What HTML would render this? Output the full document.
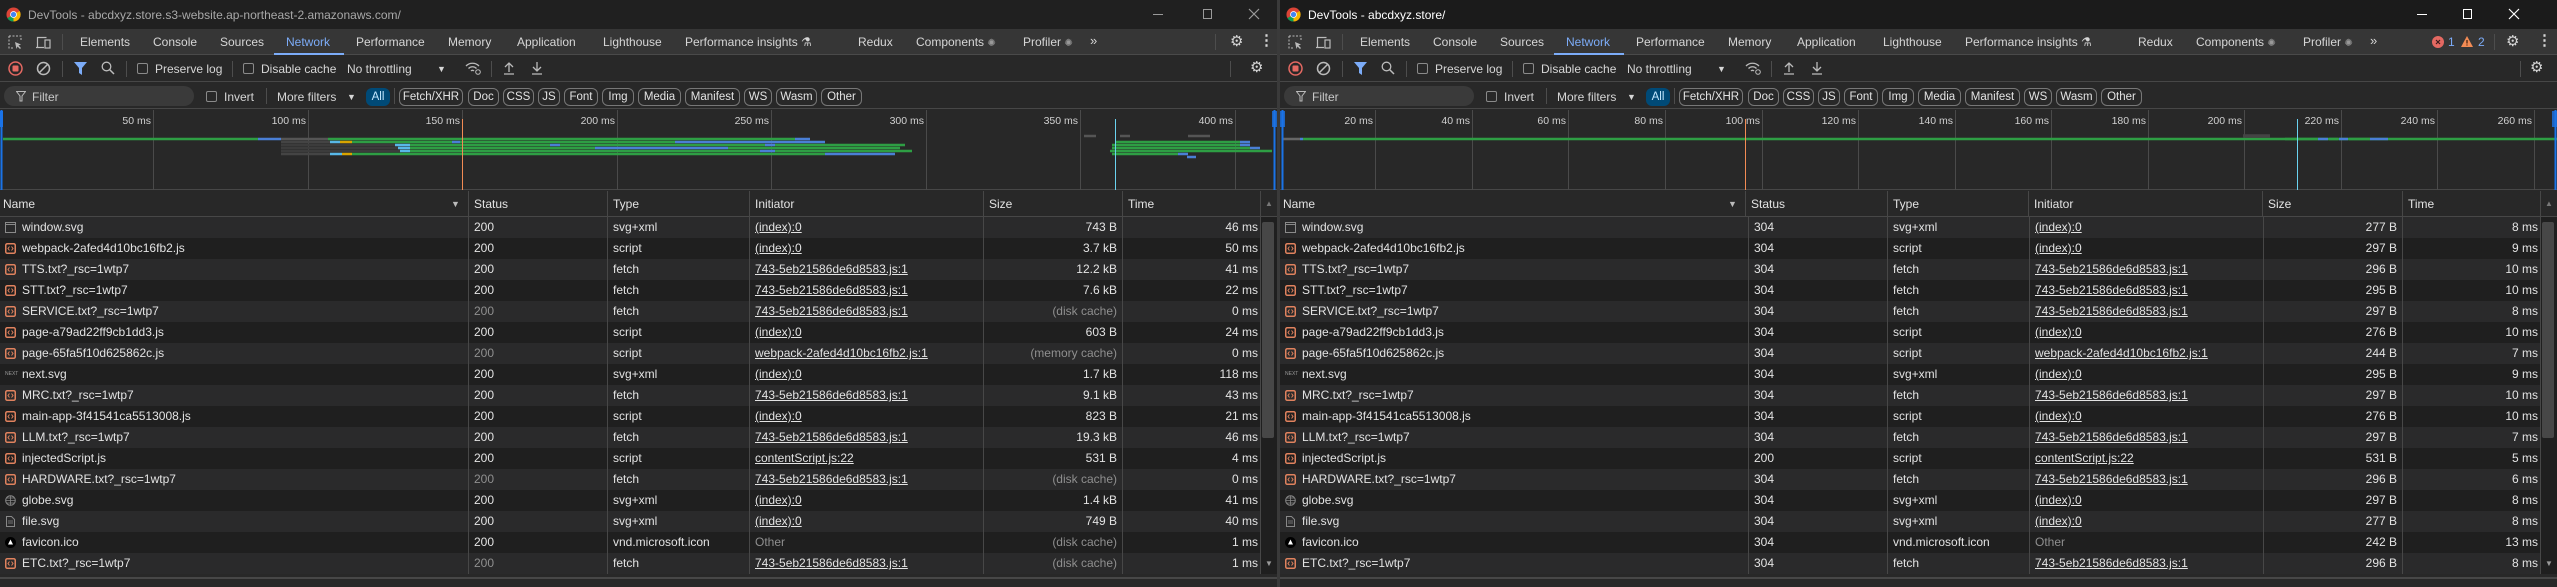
<!DOCTYPE html>
<html><head><meta charset="utf-8">
<style>
*{box-sizing:border-box;margin:0;padding:0}
body{width:2557px;height:587px;background:#1f1f1f;overflow:hidden;font-family:"Liberation Sans",sans-serif;font-size:12px;color:#e3e3e3;position:relative}
.win{position:absolute;top:0;width:1277px;height:587px;background:#282828;overflow:hidden}
.a{position:absolute;white-space:nowrap}
.title{position:absolute;left:0;top:0;width:100%;height:29px;background:#202020}
.title .t{position:absolute;left:28px;top:8px;font-size:12px;color:#a8a8a8}
.tabs{position:absolute;left:0;top:29px;width:100%;height:26px;background:#363636;border-bottom:1px solid #4a4a4a}
.tabs .a{top:6px;color:#d6d6d6}
.tb{position:absolute;left:0;top:55px;width:100%;height:27px;background:#282828;border-bottom:1px solid #474747}
.tb .a{top:7px;color:#d6d6d6}
.fb{position:absolute;left:0;top:83px;width:100%;height:26px;background:#282828;border-bottom:1px solid #474747}
.fb .a{top:7px;color:#d6d6d6}
.pill{position:absolute;left:4px;top:3px;width:190px;height:20px;border-radius:10px;background:#3a3a3a}
.chip{position:absolute;top:5px;height:18px;border:1px solid #777;border-radius:6px;color:#e3e3e3;font-size:11.5px;text-align:center;line-height:16px}
.cb{position:absolute;top:8px;width:11px;height:11px;border:1px solid #8a8a8a;border-radius:2px}
.sep{position:absolute;top:6px;width:1px;height:16px;background:#4d4d4d}
.ov{position:absolute;left:0;top:110px;width:100%;height:80px;background:#282828;border-bottom:1px solid #474747}
.hd{position:absolute;left:0;top:191px;width:100%;height:26px;background:#282828;border-bottom:1px solid #474747;display:flex}
.rows{position:absolute;left:0;top:217px;width:100%}
.r{display:flex;height:21px;line-height:21px}
.r:nth-child(odd){background:#2a2a2b}
.r:nth-child(even){background:#1f1f1f}
.c{overflow:hidden;white-space:nowrap;padding-left:5px;border-left:1px solid #474747}
.c:first-child{border-left:none}
.hd .c{line-height:26px}
.n{width:468px;position:relative;padding-left:22px}
.s{width:139px}.y{width:142px}.i{width:234px}
.z{width:139px;text-align:right;padding-right:5px}
.m{width:138px;text-align:right;padding-right:2px}
.sc{width:17px;background:#1f1f1f;border-left:1px solid #474747}
.u{text-decoration:underline}
.g{color:#8f8f8f}
.ic{position:absolute;left:5px;top:5px}
.bot{position:absolute;left:0;top:577px;width:100%;height:10px;background:#282828;border-top:2px solid #474747}
.thumb{position:absolute;left:1262px;top:222px;width:12px;height:216px;background:#474747;border-radius:2px}
</style></head><body>

<!-- ============ LEFT WINDOW ============ -->
<div class="win" style="left:0">
 <div class="title">
  <svg class="a" style="left:6px;top:7px" width="15" height="15" viewBox="0 0 16 16"><circle cx="8" cy="8" r="7.5" fill="#db4437"/><path d="M8 8 L1.5 11.8 A7.5 7.5 0 0 0 8 15.5Z" fill="#0f9d58"/><path d="M8 8 L8 15.5 A7.5 7.5 0 0 0 14.5 4.2Z" fill="#f4b400"/><circle cx="8" cy="8" r="3.6" fill="#fff"/><circle cx="8" cy="8" r="2.8" fill="#4285f4"/></svg>
  <div class="t">DevTools - abcdxyz.store.s3-website.ap-northeast-2.amazonaws.com/</div>
  <div class="a" style="left:1153px;top:14px;width:10px;height:1px;background:#9a9a9a"></div>
  <div class="a" style="left:1203px;top:9px;width:9px;height:10px;border:1px solid #9a9a9a"></div>
  <svg class="a" style="left:1248px;top:8px" width="12" height="12"><path d="M1 1L11 11M11 1L1 11" stroke="#9a9a9a" stroke-width="1.2"/></svg>
 </div>
 <div class="tabs">
  <svg class="a" style="left:8px;top:6px" width="14" height="14"><path d="M1 1h12v5M1 1v12h5" stroke="#bbb" stroke-dasharray="2 1.5" fill="none"/><path d="M7 7l6 2.5-2.5 1 2.5 2.5-1 1-2.5-2.5-1 2.5z" fill="#bbb"/></svg>
  <svg class="a" style="left:36px;top:6px" width="15" height="14"><path d="M1.5 12V2.5h9M0 12.5h8" stroke="#bbb" fill="none" stroke-width="1.2"/><rect x="9" y="5" width="5" height="8" fill="none" stroke="#bbb" stroke-width="1.2"/></svg>
  <div class="sep" style="left:62px;top:5px"></div>
  <div class="a" style="left:80px">Elements</div>
  <div class="a" style="left:153px">Console</div>
  <div class="a" style="left:220px">Sources</div>
  <div class="a" style="left:286px;color:#7cacf8">Network</div>
  <div class="a" style="left:274px;top:24px;width:70px;height:2px;background:#7cacf8"></div>
  <div class="a" style="left:356px">Performance</div>
  <div class="a" style="left:448px">Memory</div>
  <div class="a" style="left:517px">Application</div>
  <div class="a" style="left:603px">Lighthouse</div>
  <div class="a" style="left:685px">Performance insights ⚗</div>
  <div class="a" style="left:858px">Redux</div>
  <div class="a" style="left:916px">Components <span style="color:#999;font-size:10px">✺</span></div>
  <div class="a" style="left:1023px">Profiler <span style="color:#999;font-size:10px">✺</span></div>
  <div class="a" style="left:1090px;font-size:13px;top:4px">»</div>
  <div class="sep" style="left:1215px;top:5px"></div>
  <div class="a" style="left:1230px;top:3px;font-size:15px">⚙</div>
  <div class="a" style="left:1259px;top:2px;font-size:15px;font-weight:bold">⋮</div>
 </div>
 <div class="tb">
  <svg class="a" style="left:8px;top:6px" width="15" height="15"><circle cx="7.5" cy="7.5" r="6.5" fill="none" stroke="#e46962" stroke-width="1.5"/><rect x="4.5" y="4.5" width="6" height="6" rx="1" fill="#e46962"/></svg>
  <svg class="a" style="left:36px;top:6px" width="15" height="15"><circle cx="7.5" cy="7.5" r="6" fill="none" stroke="#bbb" stroke-width="1.5"/><path d="M3.5 11.5L11.5 3.5" stroke="#bbb" stroke-width="1.5"/></svg>
  <div class="sep" style="left:62px"></div>
  <svg class="a" style="left:74px;top:7px" width="13" height="13"><path d="M0 0h13L8 6v7L5 11V6z" fill="#7cacf8"/></svg>
  <svg class="a" style="left:101px;top:6px" width="14" height="14"><circle cx="5.5" cy="5.5" r="4.3" fill="none" stroke="#bbb" stroke-width="1.3"/><path d="M8.5 8.5L13 13" stroke="#bbb" stroke-width="1.5"/></svg>
  <div class="sep" style="left:126px"></div>
  <div class="cb" style="left:137px"></div>
  <div class="a" style="left:155px">Preserve log</div>
  <div class="sep" style="left:232px"></div>
  <div class="cb" style="left:243px"></div>
  <div class="a" style="left:261px">Disable cache</div>
  <div class="a" style="left:347px">No throttling</div>
  <div class="a" style="left:437px;font-size:9px;top:9px">▼</div>
  <svg class="a" style="left:465px;top:6px" width="17" height="14"><path d="M1 5a9 9 0 0 1 13 0M3.5 7.5a5.5 5.5 0 0 1 8 0M6 10a2 2 0 0 1 3 0" stroke="#bbb" fill="none" stroke-width="1.3"/><circle cx="13" cy="11" r="2.3" fill="none" stroke="#bbb"/></svg>
  <div class="sep" style="left:491px"></div>
  <svg class="a" style="left:503px;top:6px" width="12" height="14"><path d="M6 11V2M2 6l4-4 4 4M1 13h10" stroke="#bbb" fill="none" stroke-width="1.3"/></svg>
  <svg class="a" style="left:531px;top:6px" width="12" height="14"><path d="M6 1v9M2 6l4 4 4-4M1 13h10" stroke="#bbb" fill="none" stroke-width="1.3"/></svg>
  <div class="sep" style="left:1230px"></div>
  <div class="a" style="left:1250px;top:3px;font-size:15px">⚙</div>
 </div>
 <div class="fb">
  <div class="pill"></div>
  <svg class="a" style="left:16px;top:8px" width="10" height="11"><path d="M0.5 0.5h9L6 5v5H4V5z" fill="none" stroke="#bbb"/></svg>
  <div class="a" style="left:32px;color:#c8c8c8">Filter</div>
  <div class="cb" style="left:206px;top:8px"></div>
  <div class="a" style="left:224px">Invert</div>
  <div class="sep" style="left:266px;top:5px"></div>
  <div class="a" style="left:277px">More filters</div>
  <div class="a" style="left:347px;font-size:9px;top:9px">▼</div>
  <div class="chip" style="left:366px;width:24px;background:#004a77;border-color:#004a77;color:#c2e7ff">All</div>
  <div class="sep" style="left:394px;top:5px"></div>
  <div class="chip" style="left:399px;width:64px">Fetch/XHR</div>
  <div class="chip" style="left:468px;width:31px">Doc</div>
  <div class="chip" style="left:503px;width:31px">CSS</div>
  <div class="chip" style="left:538px;width:22px">JS</div>
  <div class="chip" style="left:564px;width:34px">Font</div>
  <div class="chip" style="left:602px;width:32px">Img</div>
  <div class="chip" style="left:638px;width:43px">Media</div>
  <div class="chip" style="left:685px;width:55px">Manifest</div>
  <div class="chip" style="left:744px;width:28px">WS</div>
  <div class="chip" style="left:776px;width:41px">Wasm</div>
  <div class="chip" style="left:821px;width:41px">Other</div>
 </div>
 <div class="ov">
  <svg width="1277" height="80" style="position:absolute;left:0;top:0">
   <g stroke="#4a4a4a"><path d="M153.5 0V80M308.5 0V80M462.5 0V80M617.5 0V80M771.5 0V80M926.5 0V80M1080.5 0V80M1235.5 0V80"/></g>
   <g fill="#d0d0d0" font-family="Liberation Sans" font-size="10.5" text-anchor="end">
    <text x="151" y="14">50 ms</text><text x="306" y="14">100 ms</text><text x="460" y="14">150 ms</text><text x="615" y="14">200 ms</text><text x="769" y="14">250 ms</text><text x="924" y="14">300 ms</text><text x="1078" y="14">350 ms</text><text x="1233" y="14">400 ms</text></g>
   <g stroke-width="2.5">
    <path d="M3 29H258" stroke="#2e9e44"/><path d="M258 29H281" stroke="#4a7fd6"/><path d="M281 29H328" stroke="#555"/><path d="M328 29H795" stroke="#2e9e44"/><path d="M795 29H810" stroke="#4a7fd6"/>
    <path d="M281 32H330" stroke="#444"/><path d="M330 32H340" stroke="#58b8e8"/><path d="M340 32H352" stroke="#d9a400"/><path d="M352 32H452" stroke="#2e9e44"/><path d="M452 32H460" stroke="#4a7fd6"/><path d="M460 32H675" stroke="#2e9e44"/><path d="M675 32H825" stroke="#4a7fd6"/>
    <path d="M281 35H395" stroke="#3c3c3c"/><path d="M395 35H410" stroke="#58b8e8"/><path d="M410 35H550" stroke="#2e9e44"/><path d="M550 35H560" stroke="#4a7fd6"/><path d="M560 35H765" stroke="#2e9e44"/><path d="M765 35H775" stroke="#4a7fd6"/><path d="M775 35H905" stroke="#2e9e44"/>
    <path d="M281 38H398" stroke="#3c3c3c"/><path d="M398 38H410" stroke="#58b8e8"/><path d="M410 38H595" stroke="#2e9e44"/><path d="M595 38H728" stroke="#4a7fd6"/><path d="M728 38H900" stroke="#2e9e44"/>
    <path d="M281 41H400" stroke="#3c3c3c"/><path d="M400 41H410" stroke="#58b8e8"/><path d="M410 41H760" stroke="#2e9e44"/><path d="M760 41H775" stroke="#4a7fd6"/><path d="M775 41H912" stroke="#2e9e44"/>
    <path d="M281 44H330" stroke="#444"/><path d="M330 44H342" stroke="#58b8e8"/><path d="M342 44H352" stroke="#d9a400"/><path d="M352 44H825" stroke="#2e9e44"/><path d="M825 44H895" stroke="#4a7fd6"/>
    <path d="M1084 26H1096M1120 26H1130M1188 26H1210" stroke="#555"/>
    <path d="M1115 32H1240" stroke="#2e9e44"/><path d="M1240 32H1250" stroke="#4a7fd6"/>
    <path d="M1112 35H1240" stroke="#2e9e44"/><path d="M1240 35H1250" stroke="#4a7fd6"/>
    <path d="M1112 38H1250" stroke="#2e9e44"/><path d="M1250 38H1260" stroke="#4a7fd6"/>
    <path d="M1110 41H1272" stroke="#2e9e44"/>
    <path d="M1112 44H1178" stroke="#2e9e44"/><path d="M1178 44H1188" stroke="#4a7fd6"/>
    <path d="M1187 47H1196" stroke="#4a7fd6"/>
   </g>
   <path d="M462.5 9V80" stroke="#f28b54"/><path d="M1115.5 9V80" stroke="#6ad3f0"/>
   <rect x="0" y="1" width="3" height="16" fill="#1a73e8"/><path d="M1.5 0V80" stroke="#1a73e8" stroke-width="2"/>
   <rect x="1272" y="1" width="5" height="16" fill="#1a73e8" opacity=".8"/><path d="M1274.5 0V80" stroke="#1a73e8" stroke-width="2"/>
  </svg>
 </div>
 <div class="hd"><div class="c n" style="padding-left:3px">Name<span style="position:absolute;left:451px;font-size:9px;color:#bbb">▼</span></div><div class="c s">Status</div><div class="c y">Type</div><div class="c i">Initiator</div><div class="c z" style="text-align:left">Size</div><div class="c m" style="text-align:left;padding-left:5px">Time</div><div class="c sc" style="background:#282828;color:#777;font-size:8px;text-align:center;padding:0">▲</div></div>
 <div class="rows">
  <div class="r"><div class="c n"><svg class="ic" width="11" height="11"><rect x=".5" y=".5" width="10" height="10" fill="none" stroke="#8a8a8a"/><path d="M1 2.5h9" stroke="#8a8a8a"/></svg>window.svg</div><div class="c s">200</div><div class="c y">svg+xml</div><div class="c i"><span class="u">(index):0</span></div><div class="c z">743 B</div><div class="c m">46 ms</div><div class="c sc"></div></div>
  <div class="r"><div class="c n"><svg class="ic" width="11" height="11"><rect x=".75" y=".75" width="9.5" height="9.5" rx="1.5" fill="none" stroke="#e0825e" stroke-width="1.5"/><path d="M4.5 3.5L3 5.5l1.5 2M6.5 3.5L8 5.5l-1.5 2" stroke="#e0825e" fill="none"/></svg>webpack-2afed4d10bc16fb2.js</div><div class="c s">200</div><div class="c y">script</div><div class="c i"><span class="u">(index):0</span></div><div class="c z">3.7 kB</div><div class="c m">50 ms</div><div class="c sc"></div></div>
  <div class="r"><div class="c n"><svg class="ic" width="11" height="11"><rect x=".75" y=".75" width="9.5" height="9.5" rx="1.5" fill="none" stroke="#e0825e" stroke-width="1.5"/><path d="M4.5 3.5L3 5.5l1.5 2M6.5 3.5L8 5.5l-1.5 2" stroke="#e0825e" fill="none"/></svg>TTS.txt?_rsc=1wtp7</div><div class="c s">200</div><div class="c y">fetch</div><div class="c i"><span class="u">743-5eb21586de6d8583.js:1</span></div><div class="c z">12.2 kB</div><div class="c m">41 ms</div><div class="c sc"></div></div>
  <div class="r"><div class="c n"><svg class="ic" width="11" height="11"><rect x=".75" y=".75" width="9.5" height="9.5" rx="1.5" fill="none" stroke="#e0825e" stroke-width="1.5"/><path d="M4.5 3.5L3 5.5l1.5 2M6.5 3.5L8 5.5l-1.5 2" stroke="#e0825e" fill="none"/></svg>STT.txt?_rsc=1wtp7</div><div class="c s">200</div><div class="c y">fetch</div><div class="c i"><span class="u">743-5eb21586de6d8583.js:1</span></div><div class="c z">7.6 kB</div><div class="c m">22 ms</div><div class="c sc"></div></div>
  <div class="r"><div class="c n"><svg class="ic" width="11" height="11"><rect x=".75" y=".75" width="9.5" height="9.5" rx="1.5" fill="none" stroke="#e0825e" stroke-width="1.5"/><path d="M4.5 3.5L3 5.5l1.5 2M6.5 3.5L8 5.5l-1.5 2" stroke="#e0825e" fill="none"/></svg>SERVICE.txt?_rsc=1wtp7</div><div class="c s g">200</div><div class="c y">fetch</div><div class="c i"><span class="u">743-5eb21586de6d8583.js:1</span></div><div class="c z g">(disk cache)</div><div class="c m">0 ms</div><div class="c sc"></div></div>
  <div class="r"><div class="c n"><svg class="ic" width="11" height="11"><rect x=".75" y=".75" width="9.5" height="9.5" rx="1.5" fill="none" stroke="#e0825e" stroke-width="1.5"/><path d="M4.5 3.5L3 5.5l1.5 2M6.5 3.5L8 5.5l-1.5 2" stroke="#e0825e" fill="none"/></svg>page-a79ad22ff9cb1dd3.js</div><div class="c s">200</div><div class="c y">script</div><div class="c i"><span class="u">(index):0</span></div><div class="c z">603 B</div><div class="c m">24 ms</div><div class="c sc"></div></div>
  <div class="r"><div class="c n"><svg class="ic" width="11" height="11"><rect x=".75" y=".75" width="9.5" height="9.5" rx="1.5" fill="none" stroke="#e0825e" stroke-width="1.5"/><path d="M4.5 3.5L3 5.5l1.5 2M6.5 3.5L8 5.5l-1.5 2" stroke="#e0825e" fill="none"/></svg>page-65fa5f10d625862c.js</div><div class="c s g">200</div><div class="c y">script</div><div class="c i"><span class="u">webpack-2afed4d10bc16fb2.js:1</span></div><div class="c z g">(memory cache)</div><div class="c m">0 ms</div><div class="c sc"></div></div>
  <div class="r"><div class="c n"><span class="ic" style="font-size:5px;color:#999;top:0">NEXT</span>next.svg</div><div class="c s">200</div><div class="c y">svg+xml</div><div class="c i"><span class="u">(index):0</span></div><div class="c z">1.7 kB</div><div class="c m">118 ms</div><div class="c sc"></div></div>
  <div class="r"><div class="c n"><svg class="ic" width="11" height="11"><rect x=".75" y=".75" width="9.5" height="9.5" rx="1.5" fill="none" stroke="#e0825e" stroke-width="1.5"/><path d="M4.5 3.5L3 5.5l1.5 2M6.5 3.5L8 5.5l-1.5 2" stroke="#e0825e" fill="none"/></svg>MRC.txt?_rsc=1wtp7</div><div class="c s">200</div><div class="c y">fetch</div><div class="c i"><span class="u">743-5eb21586de6d8583.js:1</span></div><div class="c z">9.1 kB</div><div class="c m">43 ms</div><div class="c sc"></div></div>
  <div class="r"><div class="c n"><svg class="ic" width="11" height="11"><rect x=".75" y=".75" width="9.5" height="9.5" rx="1.5" fill="none" stroke="#e0825e" stroke-width="1.5"/><path d="M4.5 3.5L3 5.5l1.5 2M6.5 3.5L8 5.5l-1.5 2" stroke="#e0825e" fill="none"/></svg>main-app-3f41541ca5513008.js</div><div class="c s">200</div><div class="c y">script</div><div class="c i"><span class="u">(index):0</span></div><div class="c z">823 B</div><div class="c m">21 ms</div><div class="c sc"></div></div>
  <div class="r"><div class="c n"><svg class="ic" width="11" height="11"><rect x=".75" y=".75" width="9.5" height="9.5" rx="1.5" fill="none" stroke="#e0825e" stroke-width="1.5"/><path d="M4.5 3.5L3 5.5l1.5 2M6.5 3.5L8 5.5l-1.5 2" stroke="#e0825e" fill="none"/></svg>LLM.txt?_rsc=1wtp7</div><div class="c s">200</div><div class="c y">fetch</div><div class="c i"><span class="u">743-5eb21586de6d8583.js:1</span></div><div class="c z">19.3 kB</div><div class="c m">46 ms</div><div class="c sc"></div></div>
  <div class="r"><div class="c n"><svg class="ic" width="11" height="11"><rect x=".75" y=".75" width="9.5" height="9.5" rx="1.5" fill="none" stroke="#e0825e" stroke-width="1.5"/><path d="M4.5 3.5L3 5.5l1.5 2M6.5 3.5L8 5.5l-1.5 2" stroke="#e0825e" fill="none"/></svg>injectedScript.js</div><div class="c s">200</div><div class="c y">script</div><div class="c i"><span class="u">contentScript.js:22</span></div><div class="c z">531 B</div><div class="c m">4 ms</div><div class="c sc"></div></div>
  <div class="r"><div class="c n"><svg class="ic" width="11" height="11"><rect x=".75" y=".75" width="9.5" height="9.5" rx="1.5" fill="none" stroke="#e0825e" stroke-width="1.5"/><path d="M4.5 3.5L3 5.5l1.5 2M6.5 3.5L8 5.5l-1.5 2" stroke="#e0825e" fill="none"/></svg>HARDWARE.txt?_rsc=1wtp7</div><div class="c s g">200</div><div class="c y">fetch</div><div class="c i"><span class="u">743-5eb21586de6d8583.js:1</span></div><div class="c z g">(disk cache)</div><div class="c m">0 ms</div><div class="c sc"></div></div>
  <div class="r"><div class="c n"><svg class="ic" width="11" height="11"><circle cx="5.5" cy="5.5" r="4.8" fill="none" stroke="#888"/><path d="M.7 5.5h9.6M5.5.7v9.6M2 3h7M2 8h7" stroke="#888" stroke-width=".8"/></svg>globe.svg</div><div class="c s">200</div><div class="c y">svg+xml</div><div class="c i"><span class="u">(index):0</span></div><div class="c z">1.4 kB</div><div class="c m">41 ms</div><div class="c sc"></div></div>
  <div class="r"><div class="c n"><svg class="ic" width="11" height="11"><path d="M1.5.5h5l3 3v7h-8z" fill="none" stroke="#888"/><path d="M3 5h5M3 7h5" stroke="#888" stroke-width=".8"/></svg>file.svg</div><div class="c s">200</div><div class="c y">svg+xml</div><div class="c i"><span class="u">(index):0</span></div><div class="c z">749 B</div><div class="c m">40 ms</div><div class="c sc"></div></div>
  <div class="r"><div class="c n"><svg class="ic" width="11" height="11"><circle cx="5.5" cy="5.5" r="5.5" fill="#000"/><path d="M5.5 2.5L8 7.5H3z" fill="#fff"/></svg>favicon.ico</div><div class="c s">200</div><div class="c y">vnd.microsoft.icon</div><div class="c i g">Other</div><div class="c z g">(disk cache)</div><div class="c m">1 ms</div><div class="c sc"></div></div>
  <div class="r"><div class="c n"><svg class="ic" width="11" height="11"><rect x=".75" y=".75" width="9.5" height="9.5" rx="1.5" fill="none" stroke="#e0825e" stroke-width="1.5"/><path d="M4.5 3.5L3 5.5l1.5 2M6.5 3.5L8 5.5l-1.5 2" stroke="#e0825e" fill="none"/></svg>ETC.txt?_rsc=1wtp7</div><div class="c s g">200</div><div class="c y">fetch</div><div class="c i"><span class="u">743-5eb21586de6d8583.js:1</span></div><div class="c z g">(disk cache)</div><div class="c m">1 ms</div><div class="c sc" style="color:#999;font-size:8px;text-align:center;padding:0">▼</div></div>
 </div>
 <div class="thumb"></div>
 <div class="bot"></div>
</div>

<div style="position:absolute;left:1277px;top:0;width:3px;height:587px;background:#3a3a3a"></div>

<!-- ============ RIGHT WINDOW ============ -->
<div class="win" style="left:1280px">
 <div class="title" style="background:#1b1b1b">
  <svg class="a" style="left:6px;top:7px" width="15" height="15" viewBox="0 0 16 16"><circle cx="8" cy="8" r="7.5" fill="#db4437"/><path d="M8 8 L1.5 11.8 A7.5 7.5 0 0 0 8 15.5Z" fill="#0f9d58"/><path d="M8 8 L8 15.5 A7.5 7.5 0 0 0 14.5 4.2Z" fill="#f4b400"/><circle cx="8" cy="8" r="3.6" fill="#fff"/><circle cx="8" cy="8" r="2.8" fill="#4285f4"/></svg>
  <div class="t" style="color:#fff">DevTools - abcdxyz.store/</div>
  <div class="a" style="left:1137px;top:14px;width:10px;height:1px;background:#fff"></div>
  <div class="a" style="left:1183px;top:9px;width:9px;height:10px;border:1px solid #fff"></div>
  <svg class="a" style="left:1228px;top:8px" width="12" height="12"><path d="M1 1L11 11M11 1L1 11" stroke="#fff" stroke-width="1.2"/></svg>
 </div>
 <div class="tabs">
  <svg class="a" style="left:8px;top:6px" width="14" height="14"><path d="M1 1h12v5M1 1v12h5" stroke="#bbb" stroke-dasharray="2 1.5" fill="none"/><path d="M7 7l6 2.5-2.5 1 2.5 2.5-1 1-2.5-2.5-1 2.5z" fill="#bbb"/></svg>
  <svg class="a" style="left:36px;top:6px" width="15" height="14"><path d="M1.5 12V2.5h9M0 12.5h8" stroke="#bbb" fill="none" stroke-width="1.2"/><rect x="9" y="5" width="5" height="8" fill="none" stroke="#bbb" stroke-width="1.2"/></svg>
  <div class="sep" style="left:62px;top:5px"></div>
  <div class="a" style="left:80px">Elements</div>
  <div class="a" style="left:153px">Console</div>
  <div class="a" style="left:220px">Sources</div>
  <div class="a" style="left:286px;color:#7cacf8">Network</div>
  <div class="a" style="left:274px;top:24px;width:70px;height:2px;background:#7cacf8"></div>
  <div class="a" style="left:356px">Performance</div>
  <div class="a" style="left:448px">Memory</div>
  <div class="a" style="left:517px">Application</div>
  <div class="a" style="left:603px">Lighthouse</div>
  <div class="a" style="left:685px">Performance insights ⚗</div>
  <div class="a" style="left:858px">Redux</div>
  <div class="a" style="left:916px">Components <span style="color:#999;font-size:10px">✺</span></div>
  <div class="a" style="left:1023px">Profiler <span style="color:#999;font-size:10px">✺</span></div>
  <div class="a" style="left:1090px;font-size:13px;top:4px">»</div>
  <svg class="a" style="left:1152px;top:7px" width="12" height="12"><circle cx="6" cy="6" r="6" fill="#e46962"/><path d="M4 4l4 4M8 4l-4 4" stroke="#3a1a1a" stroke-width="1.2"/></svg>
  <div class="a" style="left:1168px;color:#7cacf8">1</div>
  <svg class="a" style="left:1181px;top:7px" width="12" height="11"><path d="M6 0L12 11H0z" fill="#f28b54"/><path d="M6 4v3.5M6 8.5v1" stroke="#3a1a0a" stroke-width="1.2"/></svg>
  <div class="a" style="left:1198px;color:#7cacf8">2</div>
  <div class="sep" style="left:1214px;top:5px"></div>
  <div class="a" style="left:1226px;top:3px;font-size:15px">⚙</div>
  <div class="a" style="left:1257px;top:2px;font-size:15px;font-weight:bold">⋮</div>
 </div>
 <div class="tb">
  <svg class="a" style="left:8px;top:6px" width="15" height="15"><circle cx="7.5" cy="7.5" r="6.5" fill="none" stroke="#e46962" stroke-width="1.5"/><rect x="4.5" y="4.5" width="6" height="6" rx="1" fill="#e46962"/></svg>
  <svg class="a" style="left:36px;top:6px" width="15" height="15"><circle cx="7.5" cy="7.5" r="6" fill="none" stroke="#bbb" stroke-width="1.5"/><path d="M3.5 11.5L11.5 3.5" stroke="#bbb" stroke-width="1.5"/></svg>
  <div class="sep" style="left:62px"></div>
  <svg class="a" style="left:74px;top:7px" width="13" height="13"><path d="M0 0h13L8 6v7L5 11V6z" fill="#7cacf8"/></svg>
  <svg class="a" style="left:101px;top:6px" width="14" height="14"><circle cx="5.5" cy="5.5" r="4.3" fill="none" stroke="#bbb" stroke-width="1.3"/><path d="M8.5 8.5L13 13" stroke="#bbb" stroke-width="1.5"/></svg>
  <div class="sep" style="left:126px"></div>
  <div class="cb" style="left:137px"></div>
  <div class="a" style="left:155px">Preserve log</div>
  <div class="sep" style="left:232px"></div>
  <div class="cb" style="left:243px"></div>
  <div class="a" style="left:261px">Disable cache</div>
  <div class="a" style="left:347px">No throttling</div>
  <div class="a" style="left:437px;font-size:9px;top:9px">▼</div>
  <svg class="a" style="left:465px;top:6px" width="17" height="14"><path d="M1 5a9 9 0 0 1 13 0M3.5 7.5a5.5 5.5 0 0 1 8 0M6 10a2 2 0 0 1 3 0" stroke="#bbb" fill="none" stroke-width="1.3"/><circle cx="13" cy="11" r="2.3" fill="none" stroke="#bbb"/></svg>
  <div class="sep" style="left:491px"></div>
  <svg class="a" style="left:503px;top:6px" width="12" height="14"><path d="M6 11V2M2 6l4-4 4 4M1 13h10" stroke="#bbb" fill="none" stroke-width="1.3"/></svg>
  <svg class="a" style="left:531px;top:6px" width="12" height="14"><path d="M6 1v9M2 6l4 4 4-4M1 13h10" stroke="#bbb" fill="none" stroke-width="1.3"/></svg>
  <div class="sep" style="left:1240px"></div>
  <div class="a" style="left:1250px;top:3px;font-size:15px">⚙</div>
 </div>
 <div class="fb">
  <div class="pill"></div>
  <svg class="a" style="left:16px;top:8px" width="10" height="11"><path d="M0.5 0.5h9L6 5v5H4V5z" fill="none" stroke="#bbb"/></svg>
  <div class="a" style="left:32px;color:#c8c8c8">Filter</div>
  <div class="cb" style="left:206px;top:8px"></div>
  <div class="a" style="left:224px">Invert</div>
  <div class="sep" style="left:266px;top:5px"></div>
  <div class="a" style="left:277px">More filters</div>
  <div class="a" style="left:347px;font-size:9px;top:9px">▼</div>
  <div class="chip" style="left:366px;width:24px;background:#004a77;border-color:#004a77;color:#c2e7ff">All</div>
  <div class="sep" style="left:394px;top:5px"></div>
  <div class="chip" style="left:399px;width:64px">Fetch/XHR</div>
  <div class="chip" style="left:468px;width:31px">Doc</div>
  <div class="chip" style="left:503px;width:31px">CSS</div>
  <div class="chip" style="left:538px;width:22px">JS</div>
  <div class="chip" style="left:564px;width:34px">Font</div>
  <div class="chip" style="left:602px;width:32px">Img</div>
  <div class="chip" style="left:638px;width:43px">Media</div>
  <div class="chip" style="left:685px;width:55px">Manifest</div>
  <div class="chip" style="left:744px;width:28px">WS</div>
  <div class="chip" style="left:776px;width:41px">Wasm</div>
  <div class="chip" style="left:821px;width:41px">Other</div>
 </div>
 <div class="ov">
  <svg width="1277" height="80" style="position:absolute;left:0;top:0">
   <g stroke="#4a4a4a"><path d="M95.5 0V80M192.5 0V80M288.5 0V80M385.5 0V80M482.5 0V80M578.5 0V80M675.5 0V80M771.5 0V80M868.5 0V80M964.5 0V80M1061.5 0V80M1157.5 0V80M1254.5 0V80"/></g>
   <g fill="#d0d0d0" font-family="Liberation Sans" font-size="10.5" text-anchor="end">
    <text x="93" y="14">20 ms</text><text x="190" y="14">40 ms</text><text x="286" y="14">60 ms</text><text x="383" y="14">80 ms</text><text x="480" y="14">100 ms</text><text x="576" y="14">120 ms</text><text x="673" y="14">140 ms</text><text x="769" y="14">160 ms</text><text x="866" y="14">180 ms</text><text x="962" y="14">200 ms</text><text x="1059" y="14">220 ms</text><text x="1155" y="14">240 ms</text><text x="1252" y="14">260 ms</text></g>
   <g stroke-width="2.5">
    <path d="M3 29H20" stroke="#666"/><path d="M20 29H23" stroke="#4a7fd6"/><path d="M23 29H1277" stroke="#2e9e44"/>
    <path d="M963 26H990" stroke="#444" stroke-width="3.5"/>
    <path d="M1005 29H1038" stroke="#2e9e44"/><path d="M1038 29H1048" stroke="#4a7fd6"/><path d="M1049 29H1058" stroke="#2e9e44"/><path d="M1059 29H1068" stroke="#4a7fd6"/><path d="M1069 29H1090" stroke="#2e9e44"/><path d="M1090 29H1108" stroke="#4a7fd6"/>
   </g>
   <path d="M465.5 9V80" stroke="#f28b54"/><path d="M1017.5 9V80" stroke="#6ad3f0"/>
   <rect x="0" y="1" width="5" height="16" fill="#1a73e8" opacity=".8"/><path d="M2.5 0V80" stroke="#1a73e8" stroke-width="2"/>
   <rect x="1272" y="1" width="5" height="16" fill="#1a73e8" opacity=".8"/><path d="M1275.5 0V80" stroke="#1a73e8" stroke-width="2"/>
  </svg>
 </div>
 <div class="hd"><div class="c n" style="padding-left:3px;width:465px">Name<span style="position:absolute;left:448px;font-size:9px;color:#bbb">▼</span></div><div class="c s" style="width:142px">Status</div><div class="c y" style="width:141px">Type</div><div class="c i">Initiator</div><div class="c z" style="text-align:left;width:140px">Size</div><div class="c m" style="text-align:left;padding-left:5px">Time</div><div class="c sc" style="background:#282828;color:#777;font-size:8px;text-align:center;padding:0">▲</div></div>
 <div class="rows" id="rr">
  <div class="r"><div class="c n"><svg class="ic" width="11" height="11"><rect x=".5" y=".5" width="10" height="10" fill="none" stroke="#8a8a8a"/><path d="M1 2.5h9" stroke="#8a8a8a"/></svg>window.svg</div><div class="c s">304</div><div class="c y">svg+xml</div><div class="c i"><span class="u">(index):0</span></div><div class="c z">277 B</div><div class="c m">8 ms</div><div class="c sc"></div></div>
  <div class="r"><div class="c n"><svg class="ic" width="11" height="11"><rect x=".75" y=".75" width="9.5" height="9.5" rx="1.5" fill="none" stroke="#e0825e" stroke-width="1.5"/><path d="M4.5 3.5L3 5.5l1.5 2M6.5 3.5L8 5.5l-1.5 2" stroke="#e0825e" fill="none"/></svg>webpack-2afed4d10bc16fb2.js</div><div class="c s">304</div><div class="c y">script</div><div class="c i"><span class="u">(index):0</span></div><div class="c z">297 B</div><div class="c m">9 ms</div><div class="c sc"></div></div>
  <div class="r"><div class="c n"><svg class="ic" width="11" height="11"><rect x=".75" y=".75" width="9.5" height="9.5" rx="1.5" fill="none" stroke="#e0825e" stroke-width="1.5"/><path d="M4.5 3.5L3 5.5l1.5 2M6.5 3.5L8 5.5l-1.5 2" stroke="#e0825e" fill="none"/></svg>TTS.txt?_rsc=1wtp7</div><div class="c s">304</div><div class="c y">fetch</div><div class="c i"><span class="u">743-5eb21586de6d8583.js:1</span></div><div class="c z">296 B</div><div class="c m">10 ms</div><div class="c sc"></div></div>
  <div class="r"><div class="c n"><svg class="ic" width="11" height="11"><rect x=".75" y=".75" width="9.5" height="9.5" rx="1.5" fill="none" stroke="#e0825e" stroke-width="1.5"/><path d="M4.5 3.5L3 5.5l1.5 2M6.5 3.5L8 5.5l-1.5 2" stroke="#e0825e" fill="none"/></svg>STT.txt?_rsc=1wtp7</div><div class="c s">304</div><div class="c y">fetch</div><div class="c i"><span class="u">743-5eb21586de6d8583.js:1</span></div><div class="c z">295 B</div><div class="c m">10 ms</div><div class="c sc"></div></div>
  <div class="r"><div class="c n"><svg class="ic" width="11" height="11"><rect x=".75" y=".75" width="9.5" height="9.5" rx="1.5" fill="none" stroke="#e0825e" stroke-width="1.5"/><path d="M4.5 3.5L3 5.5l1.5 2M6.5 3.5L8 5.5l-1.5 2" stroke="#e0825e" fill="none"/></svg>SERVICE.txt?_rsc=1wtp7</div><div class="c s">304</div><div class="c y">fetch</div><div class="c i"><span class="u">743-5eb21586de6d8583.js:1</span></div><div class="c z">297 B</div><div class="c m">8 ms</div><div class="c sc"></div></div>
  <div class="r"><div class="c n"><svg class="ic" width="11" height="11"><rect x=".75" y=".75" width="9.5" height="9.5" rx="1.5" fill="none" stroke="#e0825e" stroke-width="1.5"/><path d="M4.5 3.5L3 5.5l1.5 2M6.5 3.5L8 5.5l-1.5 2" stroke="#e0825e" fill="none"/></svg>page-a79ad22ff9cb1dd3.js</div><div class="c s">304</div><div class="c y">script</div><div class="c i"><span class="u">(index):0</span></div><div class="c z">276 B</div><div class="c m">10 ms</div><div class="c sc"></div></div>
  <div class="r"><div class="c n"><svg class="ic" width="11" height="11"><rect x=".75" y=".75" width="9.5" height="9.5" rx="1.5" fill="none" stroke="#e0825e" stroke-width="1.5"/><path d="M4.5 3.5L3 5.5l1.5 2M6.5 3.5L8 5.5l-1.5 2" stroke="#e0825e" fill="none"/></svg>page-65fa5f10d625862c.js</div><div class="c s">304</div><div class="c y">script</div><div class="c i"><span class="u">webpack-2afed4d10bc16fb2.js:1</span></div><div class="c z">244 B</div><div class="c m">7 ms</div><div class="c sc"></div></div>
  <div class="r"><div class="c n"><span class="ic" style="font-size:5px;color:#999;top:0">NEXT</span>next.svg</div><div class="c s">304</div><div class="c y">svg+xml</div><div class="c i"><span class="u">(index):0</span></div><div class="c z">295 B</div><div class="c m">9 ms</div><div class="c sc"></div></div>
  <div class="r"><div class="c n"><svg class="ic" width="11" height="11"><rect x=".75" y=".75" width="9.5" height="9.5" rx="1.5" fill="none" stroke="#e0825e" stroke-width="1.5"/><path d="M4.5 3.5L3 5.5l1.5 2M6.5 3.5L8 5.5l-1.5 2" stroke="#e0825e" fill="none"/></svg>MRC.txt?_rsc=1wtp7</div><div class="c s">304</div><div class="c y">fetch</div><div class="c i"><span class="u">743-5eb21586de6d8583.js:1</span></div><div class="c z">297 B</div><div class="c m">10 ms</div><div class="c sc"></div></div>
  <div class="r"><div class="c n"><svg class="ic" width="11" height="11"><rect x=".75" y=".75" width="9.5" height="9.5" rx="1.5" fill="none" stroke="#e0825e" stroke-width="1.5"/><path d="M4.5 3.5L3 5.5l1.5 2M6.5 3.5L8 5.5l-1.5 2" stroke="#e0825e" fill="none"/></svg>main-app-3f41541ca5513008.js</div><div class="c s">304</div><div class="c y">script</div><div class="c i"><span class="u">(index):0</span></div><div class="c z">276 B</div><div class="c m">10 ms</div><div class="c sc"></div></div>
  <div class="r"><div class="c n"><svg class="ic" width="11" height="11"><rect x=".75" y=".75" width="9.5" height="9.5" rx="1.5" fill="none" stroke="#e0825e" stroke-width="1.5"/><path d="M4.5 3.5L3 5.5l1.5 2M6.5 3.5L8 5.5l-1.5 2" stroke="#e0825e" fill="none"/></svg>LLM.txt?_rsc=1wtp7</div><div class="c s">304</div><div class="c y">fetch</div><div class="c i"><span class="u">743-5eb21586de6d8583.js:1</span></div><div class="c z">297 B</div><div class="c m">7 ms</div><div class="c sc"></div></div>
  <div class="r"><div class="c n"><svg class="ic" width="11" height="11"><rect x=".75" y=".75" width="9.5" height="9.5" rx="1.5" fill="none" stroke="#e0825e" stroke-width="1.5"/><path d="M4.5 3.5L3 5.5l1.5 2M6.5 3.5L8 5.5l-1.5 2" stroke="#e0825e" fill="none"/></svg>injectedScript.js</div><div class="c s">200</div><div class="c y">script</div><div class="c i"><span class="u">contentScript.js:22</span></div><div class="c z">531 B</div><div class="c m">5 ms</div><div class="c sc"></div></div>
  <div class="r"><div class="c n"><svg class="ic" width="11" height="11"><rect x=".75" y=".75" width="9.5" height="9.5" rx="1.5" fill="none" stroke="#e0825e" stroke-width="1.5"/><path d="M4.5 3.5L3 5.5l1.5 2M6.5 3.5L8 5.5l-1.5 2" stroke="#e0825e" fill="none"/></svg>HARDWARE.txt?_rsc=1wtp7</div><div class="c s">304</div><div class="c y">fetch</div><div class="c i"><span class="u">743-5eb21586de6d8583.js:1</span></div><div class="c z">296 B</div><div class="c m">6 ms</div><div class="c sc"></div></div>
  <div class="r"><div class="c n"><svg class="ic" width="11" height="11"><circle cx="5.5" cy="5.5" r="4.8" fill="none" stroke="#888"/><path d="M.7 5.5h9.6M5.5.7v9.6M2 3h7M2 8h7" stroke="#888" stroke-width=".8"/></svg>globe.svg</div><div class="c s">304</div><div class="c y">svg+xml</div><div class="c i"><span class="u">(index):0</span></div><div class="c z">297 B</div><div class="c m">8 ms</div><div class="c sc"></div></div>
  <div class="r"><div class="c n"><svg class="ic" width="11" height="11"><path d="M1.5.5h5l3 3v7h-8z" fill="none" stroke="#888"/><path d="M3 5h5M3 7h5" stroke="#888" stroke-width=".8"/></svg>file.svg</div><div class="c s">304</div><div class="c y">svg+xml</div><div class="c i"><span class="u">(index):0</span></div><div class="c z">277 B</div><div class="c m">8 ms</div><div class="c sc"></div></div>
  <div class="r"><div class="c n"><svg class="ic" width="11" height="11"><circle cx="5.5" cy="5.5" r="5.5" fill="#000"/><path d="M5.5 2.5L8 7.5H3z" fill="#fff"/></svg>favicon.ico</div><div class="c s">304</div><div class="c y">vnd.microsoft.icon</div><div class="c i g">Other</div><div class="c z">242 B</div><div class="c m">13 ms</div><div class="c sc"></div></div>
  <div class="r"><div class="c n"><svg class="ic" width="11" height="11"><rect x=".75" y=".75" width="9.5" height="9.5" rx="1.5" fill="none" stroke="#e0825e" stroke-width="1.5"/><path d="M4.5 3.5L3 5.5l1.5 2M6.5 3.5L8 5.5l-1.5 2" stroke="#e0825e" fill="none"/></svg>ETC.txt?_rsc=1wtp7</div><div class="c s">304</div><div class="c y">fetch</div><div class="c i"><span class="u">743-5eb21586de6d8583.js:1</span></div><div class="c z">296 B</div><div class="c m">8 ms</div><div class="c sc" style="color:#999;font-size:8px;text-align:center;padding:0">▼</div></div>
 </div>
 <div class="thumb"></div>
 <div class="bot"></div>
</div>
</body></html>
